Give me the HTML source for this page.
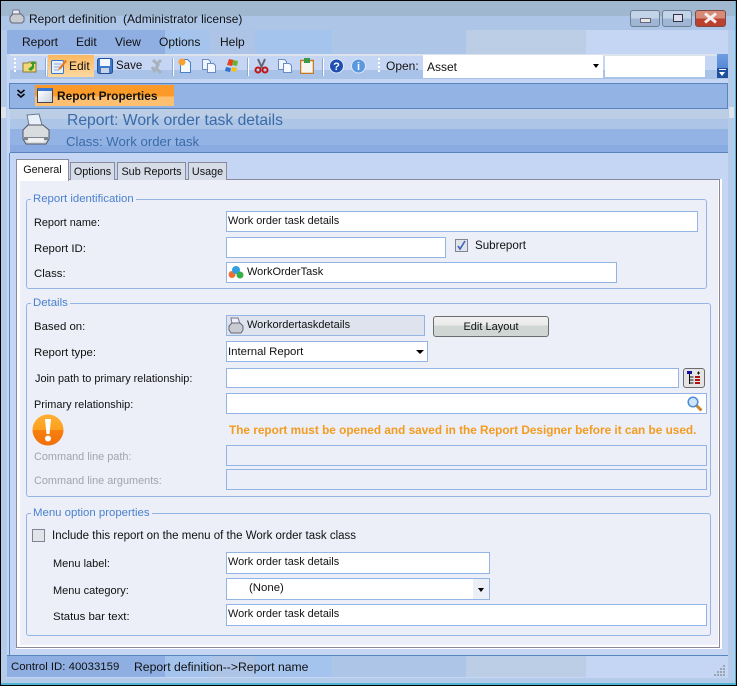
<!DOCTYPE html>
<html><head><meta charset="utf-8">
<style>
html,body{margin:0;padding:0;width:737px;height:686px;overflow:hidden;background:#000}
*{box-sizing:border-box}
body{position:relative;font-family:"Liberation Sans",sans-serif;font-size:10.9px;color:#111}
.a{position:absolute}
.t{position:absolute;white-space:nowrap;line-height:14px}
.i{position:absolute;background:#fff;border:1px solid #93b5e6}
.d{position:absolute;background:#eceef8;border:1px solid #93b5e6}
.g{position:absolute;border:1px solid #93b5e6;border-radius:3px}
.l{position:absolute;white-space:nowrap;line-height:14px;font-size:11.4px;color:#4a82cc;background:#eceef8;padding:0 2px;left:4px;top:-8px}
.gray{color:#a0a4ac}
.sep{position:absolute;top:58px;height:18px;background:#fff;border-left:1px solid #8fa8cc;width:2px}
.tab{position:absolute;top:162px;height:18px;background:#d6dde8;border:1px solid #8a8a9a;border-bottom:none;text-align:center;line-height:18px;font-size:10.8px}
.arr{position:absolute;width:0;height:0;border-left:4px solid transparent;border-right:4px solid transparent;border-top:4px solid #000}
</style></head><body>
<div class="a" style="left:1px;top:1px;width:735px;height:684px;background:#b4cbea;border-bottom:2px solid #4fb4d4;border-right:1px solid #4fb4d4"></div>
<div class="a" style="left:1px;top:1px;width:734px;height:15px;background:#9fb7cf"></div>
<div class="a" style="left:1px;top:16px;width:734px;height:14px;background:#adc5e6"></div>
<div class="a" style="left:7px;top:30px;width:721px;height:648px;background:#c5d6f5"></div>
<div class="a" style="left:1px;top:107px;width:5px;height:11px;background:#dfe3ea"></div>
<div class="a" style="left:729px;top:107px;width:5px;height:11px;background:#dfe3ea"></div>
<div class="a" style="left:9px;top:153px;width:1px;height:502px;background:#5a84bc"></div>
<svg class="a" style="left:9px;top:9px" width="16" height="16" viewBox="0 0 16 16"><path d="M4 1h6l1 5H3z" fill="#e8eef6" stroke="#778"/><path d="M1 8l3-3h8l3 3v4l-2 2H3l-2-2z" fill="#c8ccd0" stroke="#667"/></svg>
<div class="t" style="left:29px;top:12px;font-size:12px">Report definition&nbsp; (Administrator license)</div>

<div class="a" style="left:630px;top:10px;width:30px;height:17px;border:1px solid #6e7f93;border-radius:3px;background:linear-gradient(#c4d4e8 50%,#9fb7d4 50%)"><div class="a" style="left:9px;top:7px;width:11px;height:5px;background:#e8e8e8;border:1px solid #667"></div></div>
<div class="a" style="left:662px;top:10px;width:30px;height:17px;border:1px solid #6e7f93;border-radius:3px;background:linear-gradient(#c4d4e8 50%,#9fb7d4 50%)"><div class="a" style="left:10px;top:3px;width:10px;height:8px;border:1px solid #334;background:#dde"></div></div>
<div class="a" style="left:695px;top:10px;width:31px;height:17px;border:1px solid #7c4a3e;border-radius:3px;background:linear-gradient(#d88a78 50%,#bc4030 50%)"></div>
<svg class="a" style="left:703px;top:12px" width="15" height="12"><path d="M2 1.500L13 10.500M13 1.500L2 10.500" stroke="#f4eeee" stroke-width="3"/></svg>

<div class="a" style="left:7px;top:30px;width:158px;height:24px;background:#8fafe2"></div>
<div class="a" style="left:165px;top:30px;width:45px;height:24px;background:#a4c4ee"></div>
<div class="a" style="left:210px;top:30px;width:45px;height:24px;background:#adc4e6"></div>
<div class="a" style="left:255px;top:30px;width:77px;height:24px;background:#a4c4ee"></div>
<div class="a" style="left:332px;top:30px;width:134px;height:24px;background:#adc5e6"></div>
<div class="a" style="left:466px;top:30px;width:120px;height:24px;background:#bccde6"></div>
<div class="t" style="left:22px;top:35px;font-size:12px">Report</div>
<div class="t" style="left:76px;top:35px;font-size:12px">Edit</div>
<div class="t" style="left:115px;top:35px;font-size:12px">View</div>
<div class="t" style="left:159px;top:35px;font-size:12px">Options</div>
<div class="t" style="left:220px;top:35px;font-size:12px">Help</div>

<div class="a" style="left:10px;top:54px;width:718px;height:25px;background:linear-gradient(#dde3ec 0,#dde3ec 2px,#c5d6f5 2px,#c5d6f5 16px,#a9c3e8 16px,#a9c3e8 100%)"></div>
<div class="a" style="left:14px;top:58px;width:2px;height:16px;background:repeating-linear-gradient(#fff 0,#fff 2px,transparent 2px,transparent 4px)"></div>
<div class="a" style="left:378px;top:58px;width:2px;height:16px;background:repeating-linear-gradient(#fff 0,#fff 2px,transparent 2px,transparent 4px)"></div>
<svg class="a" style="left:22px;top:59px" width="16" height="14"><path d="M1 4h5l1-1h7v10H1z" fill="#f0d878" stroke="#8a7a30"/><path d="M6 10l4-3V5H8l3-3 3 3h-2v4l-3 3z" fill="#3a9a28"/></svg>
<div class="sep" style="left:45px"></div>
<div class="a" style="left:48px;top:55px;width:46px;height:22px;background:linear-gradient(#fbb860,#fcd8a0)"></div>
<svg class="a" style="left:50px;top:57px" width="17" height="18"><rect x="1.500" y="3.500" width="12" height="13" rx="1" fill="#e8f0fa" stroke="#3a78c8"/><path d="M4 7h7M4 10h7M4 13h5" stroke="#88a8d8"/><path d="M9 11l6-8 2 1-6 8-3 1z" fill="#e87820"/></svg>
<div class="t" style="left:69px;top:59px;font-size:12px">Edit</div>
<svg class="a" style="left:97px;top:58px" width="16" height="16"><rect x=".5" y=".5" width="15" height="15" rx="2" fill="#3f78c8" stroke="#1e4f9c"/><rect x="3" y="1" width="10" height="7" fill="#f4f8fc"/><rect x="4" y="10" width="8" height="5" fill="#c8d4e4"/></svg>
<div class="t" style="left:116px;top:59px;font-size:11.5px">Save</div>
<svg class="a" style="left:150px;top:59px" width="14" height="15"><path d="M3 1l5 5-2 3 5 5M11 1L7 5M2 8l3 5" stroke="#a8b0bc" stroke-width="3" fill="none"/></svg>
<div class="sep" style="left:172px"></div>
<svg class="a" style="left:178px;top:58px" width="15" height="16"><path d="M2.500 1.500h7l3 3v10h-10z" fill="#f4f8ff" stroke="#4a80c8"/><circle cx="4" cy="4" r="3.500" fill="#f8a030"/></svg>
<svg class="a" style="left:201px;top:58px" width="16" height="16"><path d="M1.500 1.500h6l2 2v8h-8z" fill="#f0f4fc" stroke="#6a8cc0"/><path d="M6.500 5.500h6l2 2v7h-8z" fill="#f4f8ff" stroke="#6a8cc0"/></svg>
<svg class="a" style="left:224px;top:58px" width="15" height="15"><path d="M3 7l2-6 5 1-2 6z" fill="#e84020"/><path d="M9 2l5 1-1 5-5-1z" fill="#70b030"/><path d="M2 9l5 1-1 4-5-1z" fill="#3070d0"/><path d="M8 9l5 1-1 4-5-1z" fill="#f0c020"/></svg>
<div class="sep" style="left:247px"></div>
<svg class="a" style="left:254px;top:58px" width="15" height="16"><path d="M4 1l4 9M11 1L7 10" stroke="#667" stroke-width="2"/><circle cx="4" cy="12" r="2.500" fill="none" stroke="#c01818" stroke-width="2"/><circle cx="11" cy="12" r="2.500" fill="none" stroke="#c01818" stroke-width="2"/></svg>
<svg class="a" style="left:277px;top:58px" width="16" height="16"><path d="M1.500 1.500h6l2 2v8h-8z" fill="#f0f4fc" stroke="#6a8cc0"/><path d="M6.500 5.500h6l2 2v7h-8z" fill="#f4f8ff" stroke="#6a8cc0"/></svg>
<svg class="a" style="left:300px;top:58px" width="14" height="16"><rect x=".5" y="2.500" width="13" height="13" fill="#f4f4f0" stroke="#c87820" stroke-width="1.500"/><rect x="4" y="0" width="6" height="5" fill="#3a9a48"/></svg>
<div class="sep" style="left:322px"></div>
<svg class="a" style="left:329px;top:58px" width="15" height="16"><circle cx="7.500" cy="8" r="7" fill="#1f4fb0" stroke="#dfe8f8"/><text x="7.500" y="12" font-size="11" font-weight="bold" fill="#fff" text-anchor="middle" font-family="Liberation Sans">?</text></svg>
<svg class="a" style="left:351px;top:58px" width="15" height="16"><circle cx="7.500" cy="8" r="7" fill="#5a98e0" stroke="#dfe8f8"/><text x="7.500" y="12" font-size="11" font-weight="bold" fill="#fff" text-anchor="middle" font-family="Liberation Sans">i</text></svg>
<div class="t" style="left:386px;top:59px;font-size:12px">Open:</div>
<div class="a" style="left:423px;top:55px;width:180px;height:23px;background:#fff"></div>
<div class="t" style="left:427px;top:60px;font-size:12px">Asset</div>
<div class="arr" style="left:593px;top:64px;border-left-width:3px;border-right-width:3px"></div>
<div class="a" style="left:605px;top:56px;width:100px;height:21px;background:#fff"></div>
<div class="a" style="left:717px;top:54px;width:11px;height:24px;background:linear-gradient(#6f9fe0,#3f78cc)"><div class="a" style="left:0;top:14px;width:11px;height:10px;background:#1e4f9c"></div><div class="a" style="left:2px;top:15px;width:7px;height:1px;background:#fff"></div><div class="arr" style="left:2px;top:18px;border-top-color:#fff;border-left-width:3px;border-right-width:3px"></div></div>

<div class="a" style="left:9px;top:83px;width:719px;height:26px;background:#93b3e4;border:1px solid #5a84bc"></div>
<svg class="a" style="left:16px;top:89px" width="10" height="10"><path d="M1.500 1l3.500 3 3.500-3M1.500 5l3.500 3 3.500-3" stroke="#000" stroke-width="1.500" fill="none"/></svg>
<div class="a" style="left:35px;top:85px;width:139px;height:21px;background:linear-gradient(#fb9a28 0,#fb9a28 55%,#fcc070 55%,#fcc070 100%)"></div>
<div class="a" style="left:37px;top:88px;width:16px;height:15px;background:linear-gradient(135deg,#fff,#c8d0dc);border:1px solid #445;border-top:3px solid #3a78d0"></div>
<div class="t" style="left:57px;top:89px;font-weight:bold;font-size:11.9px">Report Properties</div>

<div class="a" style="left:10px;top:109px;width:718px;height:10px;background:#bccde6"></div>
<div class="a" style="left:10px;top:119px;width:718px;height:10px;background:#adc5e6"></div>
<div class="a" style="left:10px;top:129px;width:718px;height:16px;background:#93b3e4"></div>
<div class="a" style="left:10px;top:145px;width:718px;height:8px;background:#8aaae2;border-bottom:1px solid #5a84bc"></div>
<svg class="a" style="left:21px;top:113px" width="30" height="33" viewBox="0 0 30 33"><path d="M6 2l12-1 3 11H8z" fill="#e8f0fa" stroke="#6a7a8c"/><path d="M2 17l5-5h15l6 5v9l-3 5H5l-3-5z" fill="#d8dcde" stroke="#556"/><path d="M3 24h24v3H3z" fill="#7c8690"/><rect x="7" y="25" width="16" height="4" fill="#f0f0f0"/></svg>
<div class="t" style="left:67px;top:112px;font-size:15.7px;line-height:18px;color:#3a6ba8">Report: Work order task details</div>
<div class="t" style="left:66px;top:134px;font-size:13.2px;line-height:16px;color:#3a6ba8">Class: Work order task</div>

<div class="a" style="left:16px;top:179px;width:706px;height:470px;background:#fff"></div>
<div class="a" style="left:16px;top:179px;width:704px;height:469px;border:1px solid #8a8a9a;border-bottom:none"></div>
<div class="a" style="left:17px;top:647px;width:703px;height:1px;background:#8a8a9a"></div>
<div class="a" style="left:20px;top:180px;width:698px;height:465px;background:#eceef8"></div>
<div class="tab" style="left:16px;top:159px;width:53px;height:22px;background:#fff;line-height:20px;z-index:2">General</div>
<div class="tab" style="left:70px;width:45px">Options</div>
<div class="tab" style="left:117px;width:69px">Sub Reports</div>
<div class="tab" style="left:188px;width:39px">Usage</div>

<div class="g" style="left:26px;top:199px;width:681px;height:90px"><div class="l">Report identification</div></div>
<div class="t" style="left:34px;top:216px">Report name:</div>
<div class="i" style="left:226px;top:211px;width:472px;height:21px"></div>
<div class="t" style="left:228px;top:214px">Work order task details</div>
<div class="t" style="left:34px;top:242px;font-size:11.4px">Report ID:</div>
<div class="i" style="left:226px;top:237px;width:220px;height:21px"></div>
<div class="a" style="left:455px;top:239px;width:13px;height:13px;background:#dfe3ec;border:1px solid #7f8590"></div>
<svg class="a" style="left:456px;top:240px" width="11" height="11"><path d="M2 6l2 3 5-8" stroke="#3f62b8" stroke-width="1.600" fill="none"/></svg>
<div class="t" style="left:475px;top:239px;font-size:11.6px">Subreport</div>
<div class="t" style="left:34px;top:267px;font-size:11.4px">Class:</div>
<div class="i" style="left:226px;top:262px;width:391px;height:21px"></div>
<svg class="a" style="left:228px;top:265px" width="16" height="15"><circle cx="4" cy="9.500" r="3.500" fill="#f07030"/><circle cx="8" cy="5" r="4" fill="#30a0e0"/><circle cx="12" cy="10" r="3.500" fill="#38b048"/></svg>
<div class="t" style="left:247px;top:265px;font-size:11px">WorkOrderTask</div>

<div class="g" style="left:26px;top:303px;width:685px;height:194px"><div class="l">Details</div></div>
<div class="t" style="left:34px;top:320px;font-size:11.4px">Based on:</div>
<div class="a" style="left:226px;top:315px;width:199px;height:21px;background:#dfe3ee;border:1px solid #93b5e6"></div>
<svg class="a" style="left:228px;top:317px" width="16" height="17"><path d="M3 1h7l2 6H4z" fill="#eef" stroke="#778"/><path d="M1 9l3-3h8l3 3v4l-2 3H3l-2-3z" fill="#c8ccd0" stroke="#667"/></svg>
<div class="t" style="left:247px;top:318px;font-size:11px">Workordertaskdetails</div>
<div class="a" style="left:433px;top:316px;width:116px;height:21px;border:1px solid #6c6c70;border-radius:3px;background:linear-gradient(#f0f0f0 0,#eaeaea 45%,#d0d6d4 45%,#d0d6d4 100%);text-align:center;line-height:20px;font-size:11px">Edit Layout</div>
<div class="t" style="left:34px;top:346px;font-size:11.4px">Report type:</div>
<div class="i" style="left:226px;top:341px;width:202px;height:21px"></div>
<div class="t" style="left:228px;top:345px;font-size:11.4px">Internal Report</div>
<div class="arr" style="left:416px;top:350px"></div>
<div class="t" style="left:35px;top:372px">Join path to primary relationship:</div>
<div class="i" style="left:226px;top:368px;width:453px;height:20px"></div>
<div class="a" style="left:683px;top:368px;width:22px;height:20px;background:#e4e4e4;border:1px solid #6c6c70;border-radius:3px"></div>
<svg class="a" style="left:686px;top:370px" width="16" height="16"><rect x="1" y="1" width="5" height="3" fill="#1010a0"/><path d="M3.500 4v10M3.500 7h4M3.500 10h4M3.500 13h4" stroke="#111" fill="none"/><rect x="9" y="6" width="5" height="2" fill="#b01010"/><rect x="9" y="9" width="5" height="2" fill="#b01010"/><rect x="9" y="12" width="5" height="2" fill="#b01010"/><path d="M11 3h3M12.500 1.500v3" stroke="#111"/></svg>
<div class="t" style="left:34px;top:398px">Primary relationship:</div>
<div class="i" style="left:226px;top:393px;width:481px;height:21px"></div>
<svg class="a" style="left:687px;top:396px" width="16" height="16"><path d="M9 9l5.500 5.500" stroke="#c8862c" stroke-width="3"/><circle cx="6" cy="6" r="4.800" fill="#cfe4fa" stroke="#4a8ad8" stroke-width="1.500"/></svg>
<svg class="a" style="left:32px;top:414px" width="32" height="32"><defs><linearGradient id="w" x1="0" y1="0" x2="0" y2="1"><stop offset="0" stop-color="#ffb030"/><stop offset=".5" stop-color="#fca020"/><stop offset=".5" stop-color="#f88010"/><stop offset="1" stop-color="#f07008"/></linearGradient></defs><circle cx="16" cy="16" r="15.500" fill="url(#w)"/><path d="M13 5h6l-1.500 15h-3z" fill="#fff"/><circle cx="16" cy="24.500" r="3" fill="#fff"/></svg>
<div class="t" style="left:229px;top:423px;color:#f39c1f;font-weight:bold;font-size:11.8px">The report must be opened and saved in the Report Designer before it can be used.</div>
<div class="t gray" style="left:34px;top:450px">Command line path:</div>
<div class="d" style="left:226px;top:445px;width:481px;height:21px"></div>
<div class="t gray" style="left:34px;top:474px">Command line arguments:</div>
<div class="d" style="left:226px;top:469px;width:481px;height:21px"></div>

<div class="g" style="left:26px;top:513px;width:685px;height:123px"><div class="l">Menu option properties</div></div>
<div class="a" style="left:32px;top:529px;width:13px;height:13px;background:#e2e4ea;border:1px solid #7f8590"></div>
<div class="t" style="left:52px;top:529px;font-size:11.5px">Include this report on the menu of the Work order task class</div>
<div class="t" style="left:53px;top:557px;font-size:11px">Menu label:</div>
<div class="i" style="left:226px;top:552px;width:264px;height:22px"></div>
<div class="t" style="left:228px;top:555px">Work order task details</div>
<div class="t" style="left:53px;top:584px;font-size:11px">Menu category:</div>
<div class="i" style="left:226px;top:578px;width:264px;height:22px"></div>
<div class="a" style="left:473px;top:579px;width:16px;height:20px;background:#eceef8"></div>
<div class="t" style="left:249px;top:581px;font-size:11.4px">(None)</div>
<div class="arr" style="left:478px;top:588px;border-left-width:3px;border-right-width:3px"></div>
<div class="t" style="left:53px;top:610px;font-size:11.4px">Status bar text:</div>
<div class="i" style="left:226px;top:604px;width:481px;height:22px"></div>
<div class="t" style="left:228px;top:607px">Work order task details</div>

<div class="a" style="left:7px;top:655px;width:721px;height:22px;background:#c5d6f5;border-top:1px solid #5a84bc"></div>
<div class="a" style="left:7px;top:656px;width:158px;height:21px;background:#8fafe2"></div>
<div class="a" style="left:165px;top:656px;width:45px;height:21px;background:#a4c4ee"></div>
<div class="a" style="left:210px;top:656px;width:45px;height:21px;background:#adc4e6"></div>
<div class="a" style="left:255px;top:656px;width:77px;height:21px;background:#a4c4ee"></div>
<div class="a" style="left:332px;top:656px;width:134px;height:21px;background:#adc5e6"></div>
<div class="a" style="left:466px;top:656px;width:120px;height:21px;background:#bccde6"></div>
<div class="t" style="left:11px;top:660px;font-size:11.4px">Control ID: 40033159</div>
<div class="t" style="left:134px;top:660px;font-size:12.2px">Report definition--&gt;Report name</div>
<svg class="a" style="left:714px;top:664px" width="13" height="13" fill="#9aa4b0"><rect x="9" y="1" width="2" height="2"/><rect x="6" y="4" width="2" height="2"/><rect x="9" y="4" width="2" height="2"/><rect x="3" y="7" width="2" height="2"/><rect x="6" y="7" width="2" height="2"/><rect x="9" y="7" width="2" height="2"/><rect x="0" y="10" width="2" height="2"/><rect x="3" y="10" width="2" height="2"/><rect x="6" y="10" width="2" height="2"/><rect x="9" y="10" width="2" height="2"/></svg>
</body></html>
